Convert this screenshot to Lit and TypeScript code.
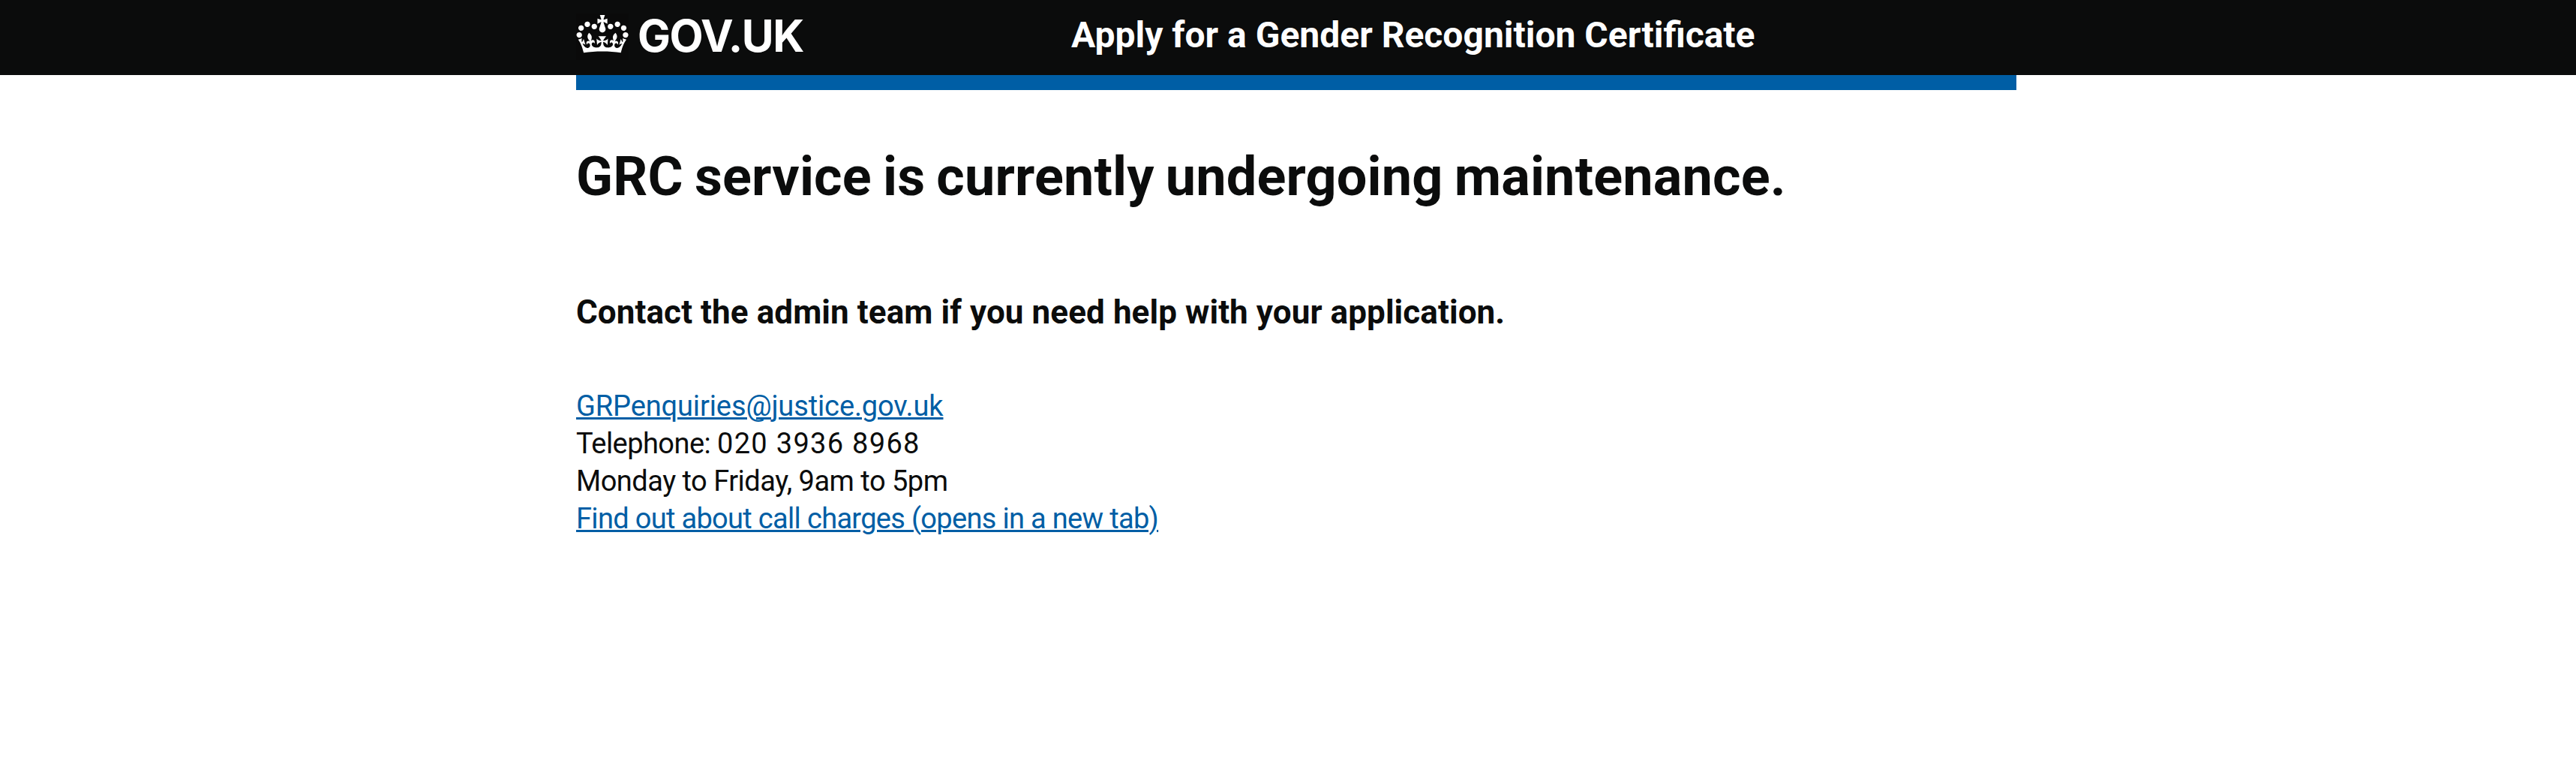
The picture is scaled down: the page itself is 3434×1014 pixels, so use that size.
import { LitElement, html, css } from "lit";

class AppRoot extends LitElement {
  static styles = css`
    :host { display: block; min-height: 1014px; background: #fff; color: #0b0c0c; font-family: Roboto, "Liberation Sans", sans-serif; font-size: 38px; line-height: 50px; white-space: nowrap; }
    .header { background: #0b0c0c; color: #fff; padding-left: 768px; height: 100px; }
    .inner { width: 1920px; display: flex; align-items: flex-start; }
    .logo { display: flex; width: 660px; }
    .crown { display: block; width: 70px; height: 62px; margin-top: 18px; background: #0a0a0a; }
    .logotype { font-family: Inter, Roboto, sans-serif; font-size: 58.6px; font-weight: 650; line-height: 95px; margin-left: 12px; letter-spacing: -1.4px; }
    .service { font-size: 48px; font-weight: 700; line-height: 93px; }
    .bar { margin-left: 768px; width: 1920px; height: 20px; background: #005ea5; }
    .main { padding: 76px 0 0 768px; width: 1920px; }
    h1 { margin: 0; font-size: 72px; line-height: 80px; font-weight: 700; word-spacing: -3px; letter-spacing: 0.17px; }
    h2 { margin: 110px 0 70px; font-size: 44px; line-height: 60px; font-weight: 700; letter-spacing: 0.08px; }
    p { margin: 0; }
    a { color: #005ea5; text-decoration: underline; text-decoration-thickness: 3px; text-underline-offset: 2px; }
    .mail { letter-spacing: -0.12px; }
    .label { letter-spacing: -0.55px; }
    .number { letter-spacing: 1.3px; }
    .hours { letter-spacing: -0.5px; }
    .charges { letter-spacing: -0.68px; }
  `;

  render() {
    return html`
      <header class="header">
        <div class="inner">
          <div class="logo">
            <svg class="crown" viewBox="-1 -3.8 133.8 118.5" fill="#fff" aria-hidden="true">
              <path d="M25 30.2c3.5 1.5 7.7-.2 9.1-3.7 1.5-3.6-.2-7.8-3.9-9.2-3.6-1.4-7.6.3-9.1 3.9-1.4 3.5.3 7.5 3.9 9zM9 39.5c3.6 1.5 7.8-.2 9.2-3.7 1.5-3.6-.2-7.8-3.9-9.1-3.6-1.5-7.6.2-9.1 3.8-1.4 3.5.3 7.5 3.8 9zM4.4 57.2c3.5 1.5 7.7-.2 9.1-3.8 1.5-3.6-.2-7.7-3.9-9.1-3.5-1.5-7.6.3-9.1 3.8-1.4 3.5.3 7.6 3.9 9.1zm38.3-21.4c3.5 1.5 7.7-.2 9.1-3.8 1.5-3.6-.2-7.7-3.9-9.1-3.6-1.5-7.6.3-9.1 3.8-1.3 3.6.4 7.7 3.9 9.1zm64.4-5.6c-3.6 1.5-7.8-.2-9.1-3.7-1.5-3.6.2-7.8 3.8-9.2 3.6-1.4 7.7.3 9.2 3.9 1.3 3.5-.4 7.5-3.9 9zm15.9 9.3c-3.6 1.5-7.7-.2-9.1-3.7-1.5-3.6.2-7.8 3.7-9.1 3.6-1.5 7.7.2 9.2 3.8 1.5 3.5-.3 7.5-3.8 9zm4.7 17.7c-3.6 1.5-7.8-.2-9.2-3.8-1.5-3.6.2-7.7 3.9-9.1 3.6-1.5 7.7.3 9.2 3.8 1.3 3.5-.4 7.6-3.9 9.1zM89.3 35.8c-3.6 1.5-7.8-.2-9.2-3.8-1.4-3.6.2-7.7 3.9-9.1 3.6-1.5 7.7.3 9.2 3.8 1.4 3.6-.3 7.7-3.9 9.1zM69.7 17.7l8.9 4.7V9.3l-8.9 2.8c-.2-.3-.5-.6-.9-.9L72.4 0H59.6l3.5 11.2c-.3.3-.6.5-.9.9l-8.8-2.8v13.1l8.8-4.7c.3.3.6.7.9.9l-5 15.4v.1c-.2.8-.4 1.6-.4 2.4 0 4.1 3.1 7.5 7 8.1h.2c.3 0 .7.1 1 .1.4 0 .7 0 1-.1h.2c4-.6 7.1-4.1 7.1-8.1 0-.8-.1-1.7-.4-2.4V34l-5.1-15.4c.4-.2.7-.6 1-.9zM66 92.8c16.9 0 32.8 1.1 47.1 3.2 4-16.9 8.9-26.7 14-33.5l-9.6-3.4c1 4.9 1.1 7.2 0 10.2-1.5-1.4-3-4.3-4.2-8.7L108.6 76c2.8-2 5-3.2 7.5-3.3-4.4 9.4-10 11.9-13.6 11.2-4.3-.8-6.3-4.6-5.6-7.9 1-4.7 5.7-5.9 8-.5 4.3-8.7-3-11.4-7.6-8.8 7.1-7.2 7.9-13.5 2.1-21.1-8 6.1-8.1 12.3-4.5 20.8-4.7-5.4-12.1-2.5-9.5 6.2 3.4-5.2 7.9-2 7.2 3.1-.6 4.3-6.4 7.8-13.5 7.2-10.3-.9-10.9-8-11.2-13.8 2.5-.5 7.1 1.8 11 7.3L80.2 60c-4.1 4.4-8 5.3-12.3 5.4 1.4-4.4 8-11.6 8-11.6H55.5s6.4 7.2 7.9 11.6c-4.2-.1-8-1-12.3-5.4l1.4 16.4c3.9-5.5 8.5-7.7 10.9-7.3-.3 5.8-.9 12.8-11.1 13.8-7.2.6-12.9-2.9-13.5-7.2-.7-5 3.8-8.3 7.1-3.1 2.7-8.7-4.6-11.6-9.4-6.2 3.7-8.5 3.6-14.7-4.6-20.8-5.8 7.6-5 13.9 2.2 21.1-4.7-2.6-11.9.1-7.7 8.8 2.3-5.5 7.1-4.2 8.1.5.7 3.3-1.3 7.1-5.7 7.9-3.5.7-9-1.8-13.5-11.2 2.5.1 4.7 1.3 7.5 3.3l-4.7-15.4c-1.2 4.4-2.7 7.2-4.3 8.7-1.1-3-.9-5.3 0-10.2l-9.5 3.4c5 6.9 9.9 16.7 14 33.5 14.8-2.1 30.8-3.2 47.7-3.2z"/>
            </svg>
            <span class="logotype">GOV.UK</span>
          </div>
          <span class="service">Apply for a Gender Recognition Certificate</span>
        </div>
      </header>
      <div class="bar"></div>
      <main class="main">
        <h1>GRC service is currently undergoing maintenance.</h1>
        <h2>Contact the admin team if you need help with your application.</h2>
        <p class="mail"><a href="mailto:GRPenquiries@justice.gov.uk">GRPenquiries@justice.gov.uk</a></p>
        <p><span class="label">Telephone: </span><span class="number">020 3936 8968</span></p>
        <p class="hours">Monday to Friday, 9am to 5pm</p>
        <p class="charges"><a href="#">Find out about call charges (opens in a new tab)</a></p>
      </main>
    `;
  }
}
customElements.define("app-root", AppRoot);
